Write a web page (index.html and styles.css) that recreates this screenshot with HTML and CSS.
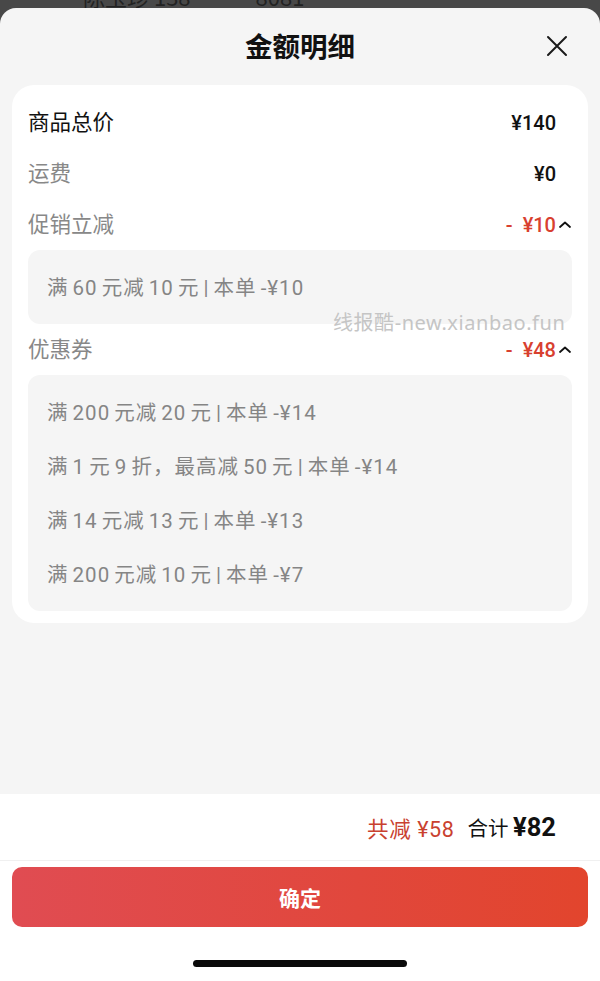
FILE: index.html
```html
<!DOCTYPE html>
<html lang="zh">
<head>
<meta charset="utf-8">
<link rel="stylesheet" href="styles.css">
</head>
<body>
<div class="backdrop"><div class="backdrop-text">陈玉珍 138 <span class="gap"></span>8081</div></div>
<div class="sheet">
  <header class="head">
    <h1 class="title">金额明细</h1>
    <svg class="close" width="22" height="22" viewBox="0 0 22 22"><path d="M2 2L20 20M20 2L2 20" stroke="#1a1a1a" stroke-width="2" fill="none" stroke-linecap="round"/></svg>
  </header>
  <main class="main">
    <section class="card">
      <div class="row">
        <span class="label strong">商品总价</span>
        <span class="value">¥140</span>
        <span class="arrow-slot"></span>
      </div>
      <div class="row">
        <span class="label">运费</span>
        <span class="value">¥0</span>
        <span class="arrow-slot"></span>
      </div>
      <div class="row">
        <span class="label">促销立减</span>
        <span class="value red">- ¥10</span>
        <span class="arrow-slot"><svg width="14" height="10" viewBox="0 0 14 10"><path d="M2 7L7 2.5L12 7" stroke="#111" stroke-width="1.8" fill="none" stroke-linecap="round" stroke-linejoin="round"/></svg></span>
      </div>
      <div class="detail">
        <div class="item">满 60 元减 10 元 | 本单 -¥10</div>
      </div>
      <div class="row">
        <span class="label">优惠券</span>
        <span class="value red">- ¥48</span>
        <span class="arrow-slot"><svg width="14" height="10" viewBox="0 0 14 10"><path d="M2 7L7 2.5L12 7" stroke="#111" stroke-width="1.8" fill="none" stroke-linecap="round" stroke-linejoin="round"/></svg></span>
      </div>
      <div class="detail">
        <div class="item">满 200 元减 20 元 | 本单 -¥14</div>
        <div class="item">满 1 元 9 折，最高减 50 元 | 本单 -¥14</div>
        <div class="item">满 14 元减 13 元 | 本单 -¥13</div>
        <div class="item">满 200 元减 10 元 | 本单 -¥7</div>
      </div>
      <div class="watermark">线报酷-new.xianbao.fun</div>
    </section>
  </main>
  <footer class="foot">
    <div class="summary">
      <span class="saved">共减 ¥58</span>
      <span class="total">合计 <b class="total-num">¥82</b></span>
    </div>
    <div class="btn-wrap">
      <button class="confirm">确定</button>
    </div>
    <div class="home"><span class="home-bar"></span></div>
  </footer>
</div>
</body>
</html>
```

FILE: styles.css
```css
* { box-sizing: border-box; }
html, body { margin: 0; padding: 0; }
body {
  width: 600px;
  height: 981px;
  overflow: hidden;
  background: #484848;
  font-family: "Noto Sans CJK SC", "Noto Sans", sans-serif;
  display: flex;
  flex-direction: column;
}
.backdrop {
  height: 8px;
  overflow: hidden;
  flex: none;
}
.backdrop-text {
  margin-top: -16px;
  padding-left: 83px;
  font-size: 22px;
  line-height: 24px;
  color: #222;
}
.gap { display: inline-block; width: 60px; }
.sheet {
  flex: 1;
  display: flex;
  flex-direction: column;
  background: #f5f5f5;
  border-radius: 16px 16px 0 0;
}
.head {
  position: relative;
  height: 77px;
  display: flex;
  align-items: center;
  justify-content: center;
}
.title {
  margin: 0 0 2px;
  font-size: 27.5px;
  font-weight: 700;
  color: #111;
  line-height: 1;
}
.close {
  position: absolute;
  right: 32px;
  top: 27px;
}
.main {
  flex: 1;
  padding: 0 12px;
}
.card {
  position: relative;
  background: #fff;
  border-radius: 22px;
  padding: 12px 16px 12px;
}
.row {
  height: 51px;
  display: flex;
  align-items: center;
}
.label {
  flex: 1;
  font-size: 21.5px;
  color: #888;
  padding-bottom: 4px;
}
.label.strong { color: #111; }
.value {
  font-family: Roboto, "Noto Sans CJK SC", sans-serif;
  font-size: 20px;
  font-weight: 500;
  color: #111;
  word-spacing: 5px;
}
.value.red { color: #d8402f; }
.arrow-slot {
  width: 16px;
  display: flex;
  justify-content: flex-end;
  align-items: center;
}
.detail {
  background: #f5f5f5;
  border-radius: 12px;
  padding: 10px 19px;
}
.detail .item {
  height: 54px;
  line-height: 56px;
  font-family: Roboto, "Noto Sans CJK SC", sans-serif;
  font-size: 20.5px;
  letter-spacing: 1px;
  word-spacing: -2px;
  color: #858585;
}
.watermark {
  position: absolute;
  left: 321px;
  top: 224px;
  font-family: "Noto Sans", "Noto Sans CJK SC", sans-serif;
  font-size: 20px;
  line-height: 28px;
  letter-spacing: 0.55px;
  color: #c5c5c5;
  white-space: nowrap;
}
.foot {
  background: #fff;
  height: 187px;
  flex: none;
  display: flex;
  flex-direction: column;
}
.summary {
  height: 67px;
  display: flex;
  align-items: center;
  justify-content: flex-end;
  padding-right: 44px;
  border-bottom: 1px solid #f0f0f0;
  gap: 13px;
}
.saved {
  font-family: Roboto, "Noto Sans CJK SC", sans-serif;
  font-size: 21.5px;
  color: #c9412f;
  letter-spacing: 0.6px;
}
.total {
  font-size: 20.5px;
  color: #111;
}
.total-num {
  font-family: Roboto, sans-serif;
  font-size: 25.5px;
  font-weight: 700;
}
.btn-wrap {
  padding: 6px 12px 0;
}
.confirm {
  width: 100%;
  height: 60px;
  border: none;
  border-radius: 10px;
  background: linear-gradient(90deg, #e04c52 0%, #e1473c 60%, #e2452d 100%);
  color: #fff;
  font-family: "Noto Sans CJK SC", sans-serif;
  font-size: 21px;
  font-weight: 700;
}
.home {
  flex: 1;
  display: flex;
  justify-content: center;
  align-items: flex-start;
  padding-top: 33px;
}
.home-bar {
  width: 214px;
  height: 7px;
  border-radius: 4px;
  background: #0a0a0a;
}
```
